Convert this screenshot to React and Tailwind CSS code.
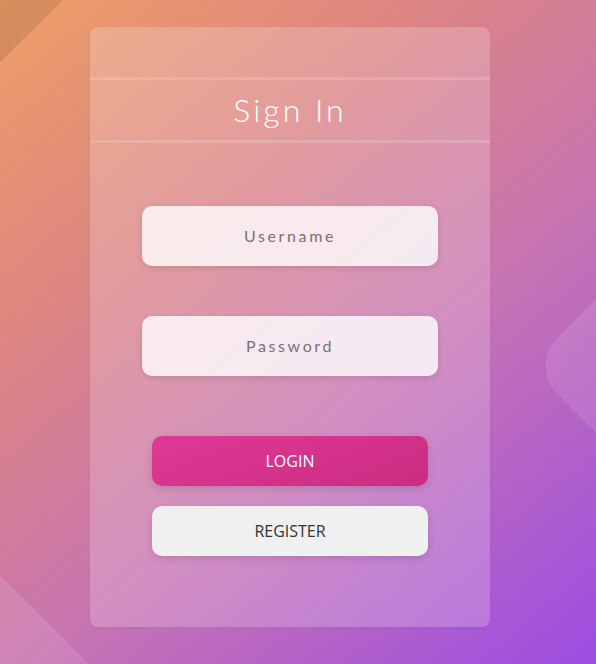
import React from "react";

const App = () => {
  return (
    <div
      className="relative w-[596px] h-[664px] overflow-hidden bg-[linear-gradient(140deg,#ee9f66_0%,#dc8582_30%,#c774b2_60%,#9c4de2_100%)]"
      style={{ fontFamily: "Lato, 'Noto Sans', sans-serif" }}
    >
      {/* background shapes */}
      <div className="absolute -left-[44px] -top-[44px] w-[88px] h-[88px] rotate-45 bg-black/10" />
      <div className="absolute -left-[63px] top-[601px] w-[126px] h-[126px] rotate-45 bg-white/10" />
      <div className="absolute left-[548px] top-[296px] w-[140px] h-[140px] rotate-45 rounded-[40px] bg-white/10 translate-x-[10px]" />

      <div className="relative pl-[90px] pt-[27px]">
        <div className="w-[400px] h-[600px] rounded-lg bg-white/20 shadow-[0_1px_3px_rgba(0,0,0,0.05)] flex flex-col">
          <div className="h-[50px]" />
          <div className="h-[3px] bg-white/15" />
          <div className="h-[60px] flex items-center justify-center">
            <h1 className="text-[32px] font-light tracking-[3px] text-white">Sign In</h1>
          </div>
          <div className="h-[3px] bg-white/15" />

          <div className="flex flex-col items-center pt-[63px]">
            <div className="w-[296px] h-[60px] rounded-[10px] bg-white/80 shadow-[0_2px_6px_rgba(0,0,0,0.12)] flex items-center justify-center">
              <span className="text-[16px] tracking-[2.6px] text-[#767274]">Username</span>
            </div>
            <div className="mt-[50px] w-[296px] h-[60px] rounded-[10px] bg-white/80 shadow-[0_2px_6px_rgba(0,0,0,0.12)] flex items-center justify-center">
              <span className="text-[16px] tracking-[2.6px] text-[#767274]">Password</span>
            </div>

            <button
              className="mt-[60px] w-[276px] h-[50px] rounded-[10px] bg-[linear-gradient(160deg,#df3996,#cb2c81)] shadow-[0_3px_8px_rgba(0,0,0,0.12)] text-white text-[16px]"
              style={{ fontFamily: "'Open Sans', sans-serif" }}
            >
              LOGIN
            </button>
            <button
              className="mt-[20px] w-[276px] h-[50px] rounded-[10px] bg-[#f0f0f0] shadow-[0_3px_8px_rgba(0,0,0,0.12)] text-[#333] text-[16px]"
              style={{ fontFamily: "'Open Sans', sans-serif" }}
            >
              REGISTER
            </button>
          </div>
        </div>
      </div>
    </div>
  );
};

export default App;
